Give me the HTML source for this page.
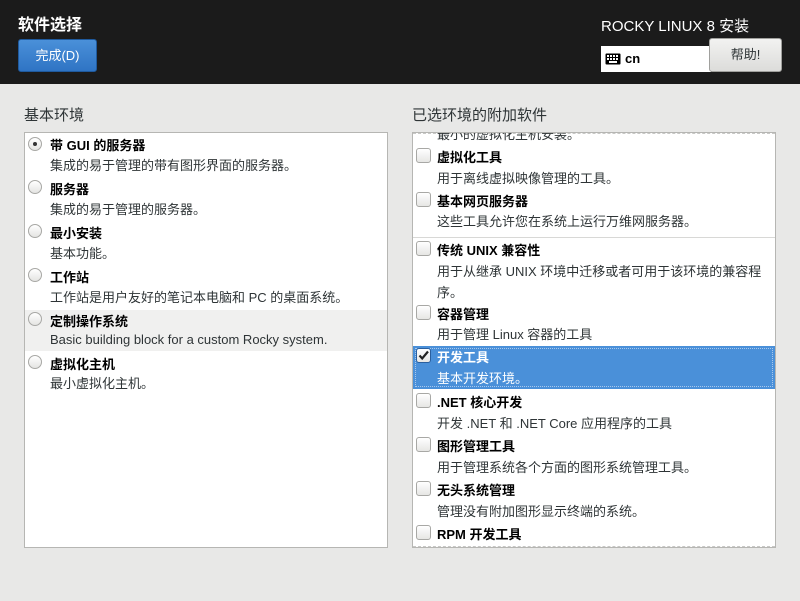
<!DOCTYPE html>
<html><head><meta charset="utf-8"><style>
*{margin:0;padding:0;box-sizing:border-box}
body{width:800px;height:601px;background:#e8e8e7;font-family:"Liberation Sans","Noto Sans CJK SC",sans-serif;font-size:13px;color:#2e3436;position:relative;overflow:hidden}
.hdr{position:absolute;left:0;top:0;width:800px;height:84px;background:#1b1b1b}
.a{position:absolute;white-space:nowrap;line-height:18px}
.b{font-weight:bold;color:#000}
.panel{position:absolute;top:132px;width:364px;height:416px;background:#fff;border:1px solid #b6b6b3;overflow:hidden}
.r{position:absolute;width:14px;height:14px;border-radius:50%;border:1px solid #a8a8a5;background:linear-gradient(#fff,#e4e4e2)}
.c{position:absolute;width:15px;height:15px;border-radius:3px;border:1px solid #a8a8a5;background:linear-gradient(#fff,#e6e6e4)}
</style></head><body>
<div class="hdr"></div>
<div class="a" style="left:18px;top:15px;font-size:16px;font-weight:bold;color:#fff;line-height:22px">软件选择</div>
<div style="position:absolute;left:18px;top:39px;width:79px;height:33px;background:linear-gradient(#4a90d9,#2f74c4);border:1px solid #1f5a9e;border-radius:3px;color:#fff;text-align:center;line-height:31px;font-size:13px">完成(D)</div>
<div class="a" style="left:601px;top:17px;font-size:15px;color:#fff;line-height:20px">ROCKY LINUX 8 安装</div>
<div style="position:absolute;left:601px;top:46px;width:110px;height:26px;background:#fff"></div>
<svg style="position:absolute;left:605px;top:53px" width="16" height="12" viewBox="0 0 16 12"><rect x="0.5" y="0.5" width="15" height="11" rx="1" fill="#000"/><g fill="#fff"><rect x="2" y="2" width="2" height="2"/><rect x="5" y="2" width="2" height="2"/><rect x="8" y="2" width="2" height="2"/><rect x="11" y="2" width="2" height="2"/><rect x="2" y="5" width="2" height="2"/><rect x="5" y="5" width="2" height="2"/><rect x="8" y="5" width="2" height="2"/><rect x="11" y="5" width="2" height="2"/><rect x="4" y="8" width="8" height="2"/></g></svg>
<div class="a" style="left:625px;top:50px;font-weight:bold;color:#000">cn</div>
<div style="position:absolute;left:709px;top:38px;width:73px;height:34px;background:linear-gradient(#f2f2f1,#dcdcda);border:1px solid #a0a09d;border-radius:3px;text-align:center;line-height:32px;color:#2e3436">帮助!</div>

<div class="a" style="left:24px;top:106px;font-size:15px;line-height:20px">基本环境</div>
<div class="a" style="left:412px;top:106px;font-size:15px;line-height:20px">已选环境的附加软件</div>

<div class="panel" style="left:24px">
 <div style="position:absolute;left:0;top:177px;width:362px;height:41px;background:#f0f0ef"></div>
 <div class="r" style="left:3px;top:4px"><div style="position:absolute;left:4px;top:4px;width:4px;height:4px;border-radius:50%;background:#333"></div></div>
 <div class="a b" style="left:25px;top:4px">带 GUI 的服务器</div>
 <div class="a" style="left:25px;top:24px">集成的易于管理的带有图形界面的服务器。</div>
 <div class="r" style="left:3px;top:47px"></div>
 <div class="a b" style="left:25px;top:48px">服务器</div>
 <div class="a" style="left:25px;top:68px">集成的易于管理的服务器。</div>
 <div class="r" style="left:3px;top:91px"></div>
 <div class="a b" style="left:25px;top:92px">最小安装</div>
 <div class="a" style="left:25px;top:112px">基本功能。</div>
 <div class="r" style="left:3px;top:135px"></div>
 <div class="a b" style="left:25px;top:136px">工作站</div>
 <div class="a" style="left:25px;top:156px">工作站是用户友好的笔记本电脑和 PC 的桌面系统。</div>
 <div class="r" style="left:3px;top:179px"></div>
 <div class="a b" style="left:25px;top:180px">定制操作系统</div>
 <div class="a" style="left:25px;top:198px">Basic building block for a custom Rocky system.</div>
 <div class="r" style="left:3px;top:222px"></div>
 <div class="a b" style="left:25px;top:223px">虚拟化主机</div>
 <div class="a" style="left:25px;top:242px">最小虚拟化主机。</div>
</div>

<div class="panel" style="left:412px">
 <div style="position:absolute;left:0;top:0;width:362px;border-top:1px dashed #c8c8c6"></div>
 <div class="a" style="left:24px;top:-7px">最小的虚拟化主机安装。</div>
 <div class="c" style="left:3px;top:15px"></div>
 <div class="a b" style="left:24px;top:16px">虚拟化工具</div>
 <div class="a" style="left:24px;top:37px">用于离线虚拟映像管理的工具。</div>
 <div class="c" style="left:3px;top:59px"></div>
 <div class="a b" style="left:24px;top:60px">基本网页服务器</div>
 <div class="a" style="left:24px;top:80px">这些工具允许您在系统上运行万维网服务器。</div>
 <div style="position:absolute;left:0;top:104px;width:362px;height:1px;background:#d8d8d6"></div>
 <div class="c" style="left:3px;top:108px"></div>
 <div class="a b" style="left:24px;top:109px">传统 UNIX 兼容性</div>
 <div class="a" style="left:24px;top:130px">用于从继承 UNIX 环境中迁移或者可用于该环境的兼容程</div>
 <div class="a" style="left:24px;top:151px">序。</div>
 <div class="c" style="left:3px;top:172px"></div>
 <div class="a b" style="left:24px;top:173px">容器管理</div>
 <div class="a" style="left:24px;top:193px">用于管理 Linux 容器的工具</div>
 <div style="position:absolute;left:0;top:213px;width:362px;height:43px;background:#4a90d9"></div>
 <div style="position:absolute;left:2px;top:215px;width:358px;height:39px;border:1px dotted #a8c8ee"></div>
 <div class="c" style="left:3px;top:215px;border-color:#2a5f9e"><svg width="13" height="13" viewBox="0 0 13 13" style="position:absolute;left:0;top:0"><path d="M2.5 6.5 L5.2 9.5 L11 2.5" stroke="#222" stroke-width="2.2" fill="none"/></svg></div>
 <div class="a b" style="left:24px;top:216px;color:#fff">开发工具</div>
 <div class="a" style="left:24px;top:237px;color:#fff">基本开发环境。</div>
 <div class="c" style="left:3px;top:260px"></div>
 <div class="a b" style="left:24px;top:261px">.NET 核心开发</div>
 <div class="a" style="left:24px;top:282px">开发 .NET 和 .NET Core 应用程序的工具</div>
 <div class="c" style="left:3px;top:304px"></div>
 <div class="a b" style="left:24px;top:305px">图形管理工具</div>
 <div class="a" style="left:24px;top:326px">用于管理系统各个方面的图形系统管理工具。</div>
 <div class="c" style="left:3px;top:348px"></div>
 <div class="a b" style="left:24px;top:349px">无头系统管理</div>
 <div class="a" style="left:24px;top:370px">管理没有附加图形显示终端的系统。</div>
 <div class="c" style="left:3px;top:392px"></div>
 <div class="a b" style="left:24px;top:393px">RPM 开发工具</div>
 <div style="position:absolute;left:0;top:413px;width:362px;border-top:1px dashed #c8c8c6"></div>
</div>
</body></html>
